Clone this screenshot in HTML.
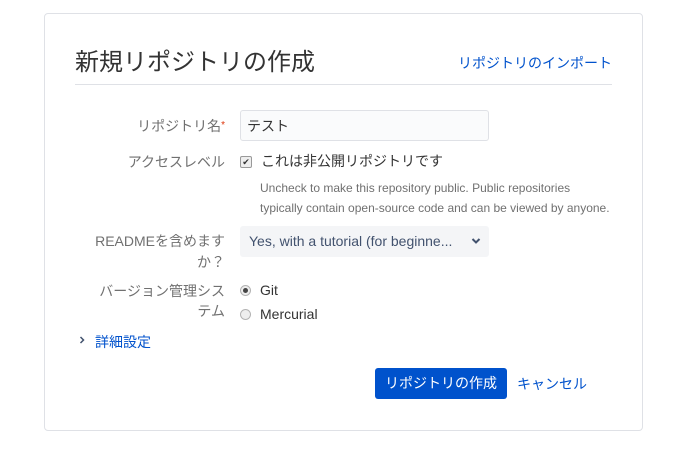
<!DOCTYPE html>
<html><head><meta charset="utf-8"><style>
body{margin:0;width:688px;height:460px;background:#fff;font-family:"Liberation Sans","Noto Sans CJK JP",sans-serif;color:#333;position:relative;overflow:hidden}
.a{position:absolute;white-space:nowrap}
.card{position:absolute;left:44px;top:13px;width:597px;height:416px;border:1px solid #dfe1e6;border-radius:4px}
.lbl{position:absolute;right:463px;text-align:right;font-size:14px;color:#707070;line-height:20px}
.blue{color:#0052cc}
.box{position:absolute;left:240px;width:249px;background:#f4f5f7;border:1px solid #dfe1e6;border-radius:3px;box-sizing:border-box}
.radio{position:absolute;left:240px;width:11px;height:11px;border:1px solid #b3b3b3;border-radius:50%;background:#eee;box-sizing:border-box}
</style></head><body>
<div class="card"></div>
<div class="a" style="left:75px;top:42px;font-size:24px;color:#333">新規リポジトリの作成</div>
<div class="a blue" style="right:76px;top:53px;font-size:14px">リポジトリのインポート</div>
<div class="a" style="left:75px;top:84px;width:537px;height:1px;background:#dfe1e6"></div>

<div class="lbl" style="top:116px">リポジトリ名<span style="color:#de350b;font-size:10px;vertical-align:top">*</span></div>
<div class="box" style="top:110px;height:31px;background:#fafbfc"></div>
<div class="a" style="left:247px;top:116px;font-size:14px">テスト</div>

<div class="lbl" style="top:152px">アクセスレベル</div>
<div class="a" style="left:240px;top:156px;width:10px;height:10px;border:1px solid #999;border-radius:2px;background:#eee;font-size:9px;line-height:10px;text-align:center;color:#333">✔</div>
<div class="a" style="left:261px;top:151px;font-size:14px">これは非公開リポジトリです</div>
<div class="a" style="left:260px;top:178px;font-size:12px;line-height:20px;color:#707070">Uncheck to make this repository public. Public repositories<br>typically contain open-source code and can be viewed by anyone.</div>

<div class="lbl" style="top:231px;line-height:21px">READMEを含めます<br>か？</div>
<div class="box" style="top:226px;height:31px;border-color:#f4f5f7"></div>
<div class="a" style="left:249px;top:233px;font-size:14px;color:#42526e">Yes, with a tutorial (for beginne...</div>
<svg class="a" style="left:471px;top:237px" width="10" height="8" viewBox="0 0 10 8"><path d="M1.5 2 L5 5.5 L8.5 2" stroke="#42526e" stroke-width="2" fill="none"/></svg>

<div class="lbl" style="top:281px">バージョン管理シス<br>テム</div>
<div class="radio" style="top:285px"><div style="width:5px;height:5px;border-radius:50%;background:#444;margin:2px"></div></div>
<div class="a" style="left:260px;top:282px;font-size:14px">Git</div>
<div class="radio" style="top:309px"></div>
<div class="a" style="left:260px;top:306px;font-size:14px">Mercurial</div>

<svg class="a" style="left:79px;top:336px" width="6" height="8" viewBox="0 0 6 8"><path d="M1.5 1 L4.5 4 L1.5 7" stroke="#42526e" stroke-width="1.5" fill="none"/></svg>
<div class="a blue" style="left:95px;top:332px;font-size:14px">詳細設定</div>

<div class="a" style="left:375px;top:368px;width:132px;height:31px;background:#0052cc;border-radius:3px;color:#fff;font-size:14px;line-height:31px;text-align:center">リポジトリの作成</div>
<div class="a blue" style="left:517px;top:374px;font-size:14px">キャンセル</div>
</body></html>
